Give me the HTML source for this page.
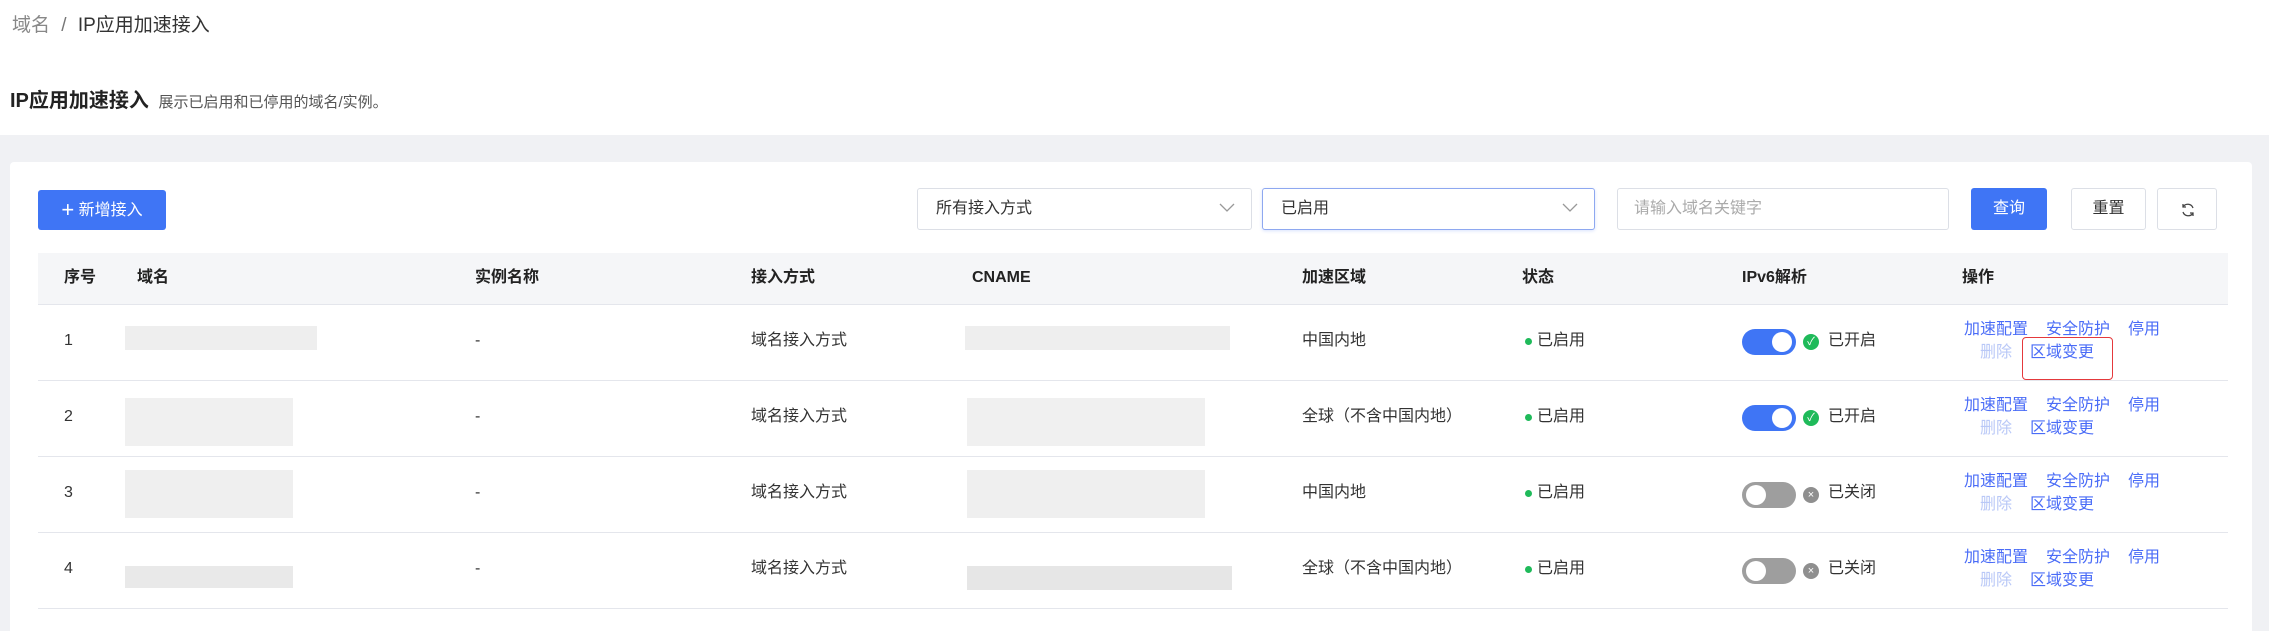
<!DOCTYPE html>
<html><head><meta charset="utf-8"><style>
*{margin:0;padding:0;box-sizing:border-box}
body{width:2269px;height:631px;overflow:hidden;background:#fff;font-family:"Liberation Sans","Noto Sans CJK SC",sans-serif;color:#333;position:relative}
.a{position:absolute;white-space:nowrap;line-height:20px}
.grey{position:absolute;left:0;top:135px;width:2269px;height:496px;background:#f0f1f4}
.card{position:absolute;left:10px;top:162px;width:2242px;height:480px;background:#fff;border-radius:4px}
.box{position:absolute;border:1px solid #dcdfe6;border-radius:3px;background:#fff}
.blob{position:absolute;background:#ececec}
.t{font-size:16px;color:#333}
.h{font-size:16px;font-weight:bold;color:#222}
.lnk{font-size:16px;color:#4a6cf7}
.dis{font-size:16px;color:#b9c8f7}
.line{position:absolute;left:38px;width:2190px;height:1px;background:#e4e6ec}
.chev{position:absolute;right:16px;top:14px}
</style></head><body>
<div class="a" style="left:12px;top:14px;font-size:19px;line-height:23px;color:#888">域名 <span style="color:#777;margin:0 6px">/</span> <span style="color:#333">IP应用加速接入</span></div>
<div class="a" style="left:10px;top:89px;font-size:20px;line-height:24px;font-weight:bold;color:#222">IP应用加速接入 <span style="font-size:15px;font-weight:normal;color:#555;margin-left:4px">展示已启用和已停用的域名/实例。</span></div>
<div class="grey"></div>
<div class="card"></div>
<div class="a" style="left:38px;top:190px;width:128px;height:40px;background:#3f75f5;border-radius:3px;color:#fff;font-size:16px;line-height:40px;text-align:center"><span style="font-size:22px;vertical-align:-2px">+</span> 新增接入</div>
<div class="box" style="left:917px;top:188px;width:335px;height:42px"><span class="a t" style="left:18px;top:10px">所有接入方式</span><svg class="chev" width="16" height="10"><polyline points="1,1 8,8 15,1" fill="none" stroke="#999" stroke-width="1.3"/></svg></div>
<div class="box" style="left:1262px;top:188px;width:333px;height:42px;border-color:#8ea8f0;box-shadow:0 1px 3px rgba(63,117,245,.2)"><span class="a t" style="left:18px;top:10px">已启用</span><svg class="chev" width="16" height="10"><polyline points="1,1 8,8 15,1" fill="none" stroke="#999" stroke-width="1.3"/></svg></div>
<div class="box" style="left:1617px;top:188px;width:332px;height:42px"><span class="a" style="left:16px;top:10px;font-size:16px;color:#aaa">请输入域名关键字</span></div>
<div class="a" style="left:1971px;top:188px;width:76px;height:42px;background:#3f75f5;border-radius:3px;color:#fff;font-size:16px;line-height:42px;text-align:center">查询</div>
<div class="box" style="left:2071px;top:188px;width:75px;height:42px;text-align:center;line-height:40px;font-size:16px">重置</div>
<div class="box" style="left:2157px;top:188px;width:60px;height:42px"><svg style="position:absolute;left:22px;top:13px" width="16" height="16" viewBox="0 0 16 16" fill="none" stroke="#444" stroke-width="1.3"><path d="M13 6A5.5 5.5 0 0 0 3 5"/><path d="M3 2v3h3"/><path d="M3 10a5.5 5.5 0 0 0 10 1"/><path d="M13 14v-3h-3"/></svg></div>
<div class="a" style="left:38px;top:253px;width:2190px;height:51px;background:#f5f6f8"></div>
<div class="line" style="top:304px"></div>
<span class="a h" style="left:64px;top:268px">序号</span>
<span class="a h" style="left:137px;top:268px">域名</span>
<span class="a h" style="left:475px;top:268px">实例名称</span>
<span class="a h" style="left:751px;top:268px">接入方式</span>
<span class="a h" style="left:972px;top:268px">CNAME</span>
<span class="a h" style="left:1302px;top:268px">加速区域</span>
<span class="a h" style="left:1522px;top:268px">状态</span>
<span class="a h" style="left:1742px;top:268px">IPv6解析</span>
<span class="a h" style="left:1962px;top:268px">操作</span>

<div class="line" style="top:380px"></div>
<div class="line" style="top:456px"></div>
<div class="line" style="top:532px"></div>
<div class="line" style="top:608px"></div>

<!-- Row 1 -->
<span class="a t" style="left:64px;top:331px">1</span>
<div class="blob" style="left:125px;top:326px;width:192px;height:24px;background:#eeeeee"></div>
<span class="a t" style="left:475px;top:331px">-</span>
<span class="a t" style="left:751px;top:331px">域名接入方式</span>
<div class="blob" style="left:965px;top:326px;width:265px;height:24px;background:#eeeeee"></div>
<span class="a t" style="left:1302px;top:331px">中国内地</span>
<div class="a" style="left:1525px;top:338px;width:7px;height:7px;border-radius:50%;background:#1fba5a"></div><span class="a t" style="left:1537px;top:331px">已启用</span>
<div class="a" style="left:1742px;top:329px;width:54px;height:26px;border-radius:13px;background:#3f75f5"><div class="a" style="left:30px;top:3px;width:20px;height:20px;border-radius:50%;background:#fff"></div></div>
<div class="a" style="left:1803px;top:334px;width:16px;height:16px;border-radius:50%;background:#1fba5a;color:#fff;font-size:11px;text-align:center;line-height:16px">✓</div>
<span class="a t" style="left:1828px;top:331px">已开启</span>
<span class="a lnk" style="left:1964px;top:320px">加速配置</span><span class="a lnk" style="left:2046px;top:320px">安全防护</span><span class="a lnk" style="left:2128px;top:320px">停用</span>
<span class="a dis" style="left:1980px;top:343px">删除</span><span class="a lnk" style="left:2030px;top:343px">区域变更</span>
<div class="a" style="left:2022px;top:337px;width:91px;height:43px;border:1.5px solid #e4393c;border-radius:4px"></div>

<!-- Row 2 -->
<span class="a t" style="left:64px;top:407px">2</span>
<div class="blob" style="left:125px;top:398px;width:168px;height:48px;background:#f0f0f0"></div>
<span class="a t" style="left:475px;top:407px">-</span>
<span class="a t" style="left:751px;top:407px">域名接入方式</span>
<div class="blob" style="left:967px;top:398px;width:238px;height:48px;background:#f0f0f0"></div>
<span class="a t" style="left:1302px;top:407px">全球（不含中国内地）</span>
<div class="a" style="left:1525px;top:414px;width:7px;height:7px;border-radius:50%;background:#1fba5a"></div><span class="a t" style="left:1537px;top:407px">已启用</span>
<div class="a" style="left:1742px;top:405px;width:54px;height:26px;border-radius:13px;background:#3f75f5"><div class="a" style="left:30px;top:3px;width:20px;height:20px;border-radius:50%;background:#fff"></div></div>
<div class="a" style="left:1803px;top:410px;width:16px;height:16px;border-radius:50%;background:#1fba5a;color:#fff;font-size:11px;text-align:center;line-height:16px">✓</div>
<span class="a t" style="left:1828px;top:407px">已开启</span>
<span class="a lnk" style="left:1964px;top:396px">加速配置</span><span class="a lnk" style="left:2046px;top:396px">安全防护</span><span class="a lnk" style="left:2128px;top:396px">停用</span>
<span class="a dis" style="left:1980px;top:419px">删除</span><span class="a lnk" style="left:2030px;top:419px">区域变更</span>

<!-- Row 3 -->
<span class="a t" style="left:64px;top:483px">3</span>
<div class="blob" style="left:125px;top:470px;width:168px;height:48px;background:#efefef"></div>
<span class="a t" style="left:475px;top:483px">-</span>
<span class="a t" style="left:751px;top:483px">域名接入方式</span>
<div class="blob" style="left:967px;top:470px;width:238px;height:48px;background:#efefef"></div>
<span class="a t" style="left:1302px;top:483px">中国内地</span>
<div class="a" style="left:1525px;top:490px;width:7px;height:7px;border-radius:50%;background:#1fba5a"></div><span class="a t" style="left:1537px;top:483px">已启用</span>
<div class="a" style="left:1742px;top:482px;width:54px;height:26px;border-radius:13px;background:#9e9e9e"><div class="a" style="left:4px;top:3px;width:20px;height:20px;border-radius:50%;background:#fff"></div></div>
<div class="a" style="left:1803px;top:487px;width:16px;height:16px;border-radius:50%;background:#8f8f8f;color:#fff;font-size:11px;text-align:center;line-height:16px">×</div>
<span class="a t" style="left:1828px;top:483px">已关闭</span>
<span class="a lnk" style="left:1964px;top:472px">加速配置</span><span class="a lnk" style="left:2046px;top:472px">安全防护</span><span class="a lnk" style="left:2128px;top:472px">停用</span>
<span class="a dis" style="left:1980px;top:495px">删除</span><span class="a lnk" style="left:2030px;top:495px">区域变更</span>

<!-- Row 4 -->
<span class="a t" style="left:64px;top:559px">4</span>
<div class="blob" style="left:125px;top:566px;width:168px;height:22px;background:#e9e9e9"></div>
<span class="a t" style="left:475px;top:559px">-</span>
<span class="a t" style="left:751px;top:559px">域名接入方式</span>
<div class="blob" style="left:967px;top:566px;width:265px;height:24px;background:#e6e6e6"></div>
<span class="a t" style="left:1302px;top:559px">全球（不含中国内地）</span>
<div class="a" style="left:1525px;top:566px;width:7px;height:7px;border-radius:50%;background:#1fba5a"></div><span class="a t" style="left:1537px;top:559px">已启用</span>
<div class="a" style="left:1742px;top:558px;width:54px;height:26px;border-radius:13px;background:#9e9e9e"><div class="a" style="left:4px;top:3px;width:20px;height:20px;border-radius:50%;background:#fff"></div></div>
<div class="a" style="left:1803px;top:563px;width:16px;height:16px;border-radius:50%;background:#8f8f8f;color:#fff;font-size:11px;text-align:center;line-height:16px">×</div>
<span class="a t" style="left:1828px;top:559px">已关闭</span>
<span class="a lnk" style="left:1964px;top:548px">加速配置</span><span class="a lnk" style="left:2046px;top:548px">安全防护</span><span class="a lnk" style="left:2128px;top:548px">停用</span>
<span class="a dis" style="left:1980px;top:571px">删除</span><span class="a lnk" style="left:2030px;top:571px">区域变更</span>
</body></html>
